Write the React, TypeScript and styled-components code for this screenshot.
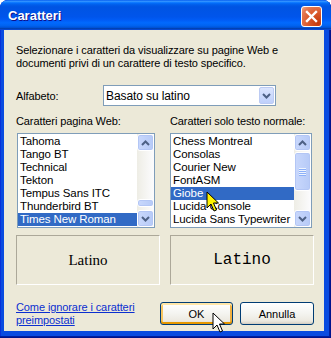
import styled, { createGlobalStyle } from "styled-components";

const Global = createGlobalStyle`
  html, body {
    margin: 0;
    padding: 0;
    background: #ffffff;
  }
  body {
    font-family: "Liberation Sans", Arial, sans-serif;
    font-size: 11px;
    letter-spacing: -0.1px;
    color: #000000;
  }
`;

const webFonts = ["Tahoma", "Tango BT", "Technical", "Tekton", "Tempus Sans ITC", "Thunderbird BT", "Times New Roman"];
const plainFonts = ["Chess Montreal", "Consolas", "Courier New", "FontASM", "Giobe", "Lucida Console", "Lucida Sans Typewriter"];

const Chevron = ({ up }: { up?: boolean }) => (
    <svg width="9" height="6" viewBox="0 0 9 6">
        <polyline
            points={up ? "1,5 4.5,1.5 8,5" : "1,1 4.5,4.5 8,1"}
            fill="none"
            stroke="#4D6185"
            strokeWidth="2"
        />
    </svg>
);

const Arrow = ({ fill }: { fill: string }) => (
    <svg width="14" height="22" viewBox="0 0 14 22">
        <path d="M1,1 L1,17 L5,13 L8,20 L10.5,19 L7.5,12 L12.5,12 Z" fill={fill} stroke="#000" strokeWidth="1" strokeLinejoin="round"/>
    </svg>
);

type ListProps = {
    items: string[];
    selected: number;
    width: number;
    offset: number;
    thumbTop: number;
    thumbHeight: number;
    grip?: boolean;
};

const FontList = ({ items, selected, width, offset, thumbTop, thumbHeight, grip }: ListProps) => (
    <ListBox $width={width} $offset={offset}>
        <Items>
            {items.map((name, i) => (
                <Item key={name} $active={i === selected}>{name}</Item>
            ))}
        </Items>
        <ScrollBar>
            <ScrollButton><Chevron up/></ScrollButton>
            <Track>
                <Thumb $top={thumbTop} $height={thumbHeight}>
                    {grip && <Grip><span/><span/><span/><span/></Grip>}
                </Thumb>
            </Track>
            <ScrollButton><Chevron/></ScrollButton>
        </ScrollBar>
    </ListBox>
);

export default function App() {
    return (
        <>
            <Global/>
            <Window>
                <TitleBar>
                    <Title>Caratteri</Title>
                    <CloseButton>
                        <svg width="13" height="13" viewBox="0 0 13 13">
                            <path d="M2,2 L11,11 M11,2 L2,11" stroke="#fff" strokeWidth="2.4" strokeLinecap="square"/>
                        </svg>
                    </CloseButton>
                </TitleBar>
                <Body>
                    <Description>
                        Selezionare i caratteri da visualizzare su pagine Web e<br/>
                        documenti privi di un carattere di testo specifico.
                    </Description>
                    <AlphabetRow>
                        <AlphabetLabel>Alfabeto:</AlphabetLabel>
                        <Combo>
                            <ComboText>Basato su latino</ComboText>
                            <ComboButton><Chevron/></ComboButton>
                        </Combo>
                    </AlphabetRow>
                    <Columns>
                        <Column>
                            <FieldLabel>Caratteri pagina Web:</FieldLabel>
                            <FontList items={webFonts} selected={6} width={138} offset={1} thumbTop={48} thumbHeight={8}/>
                            <Preview $mono={false}>Latino</Preview>
                        </Column>
                        <Column>
                            <FieldLabel>Caratteri solo testo normale:</FieldLabel>
                            <FontList items={plainFonts} selected={4} width={142} offset={0} thumbTop={1} thumbHeight={39} grip/>
                            <Preview $mono>Latino</Preview>
                        </Column>
                    </Columns>
                    <Footer>
                        <HelpLink href="#">Come ignorare i caratteri <br/>preimpostati</HelpLink>
                        <Buttons>
                            <Button $default $width={73}>OK</Button>
                            <Button $width={74}>Annulla</Button>
                        </Buttons>
                    </Footer>
                </Body>
                <Cursor $x={206} $y={191}><Arrow fill="#FFF200"/></Cursor>
                <Cursor $x={212} $y={312}><Arrow fill="#FFFFFF"/></Cursor>
            </Window>
        </>
    );
}

const Window = styled.div`
    position: relative;
    width: 331px;
    height: 338px;
    display: flex;
    flex-direction: column;
    background: #0a4be0;
    border-radius: 8px 8px 0 0;
    overflow: hidden;
    box-shadow: inset -1px -1px #00138c, inset -2px -2px #001ea0, inset 1px 1px #0831d9;
`

const TitleBar = styled.div`
    height: 30px;
    flex-shrink: 0;
    display: flex;
    align-items: center;
    justify-content: space-between;
    padding: 0 9px 0 8px;
    background: linear-gradient(to bottom, #0058ee 0%, #3593ff 4%, #288eff 6%, #127dff 8%, #036ffc 10%, #0262ee 14%, #0057e5 20%, #0054e3 24%, #0055eb 56%, #005bf5 66%, #026afe 76%, #0062ef 86%, #0052d6 92%, #0040ab 94%, #0a4be0 100%);
`

const Title = styled.span`
    font-family: "Liberation Sans", Arial, sans-serif;
    font-weight: 700;
    font-size: 13px;
    letter-spacing: 0;
    color: #ffffff;
    text-shadow: 1px 1px #0f1089;
    margin-top: 1px;
`

const CloseButton = styled.div`
    width: 21px;
    height: 21px;
    box-sizing: border-box;
    display: flex;
    align-items: center;
    justify-content: center;
    border: 1px solid #ffffff;
    border-radius: 3px;
    background: radial-gradient(circle at 85% 85%, #c3390d 0%, #d9582a 45%, #e47a54 80%, #f0a98a 100%);
    margin-top: 2px;
`

const Body = styled.div`
    flex: 1;
    display: flex;
    flex-direction: column;
    margin: 0 7px 7px 4px;
    padding: 14px 10px 0 12px;
    background: #ece9d8;
`

const Description = styled.p`
    margin: 0;
    line-height: 13px;
`

const AlphabetRow = styled.div`
    display: flex;
    align-items: center;
    margin-top: 15px;
`

const AlphabetLabel = styled.span`
    width: 87px;
`

const Combo = styled.div`
    width: 173px;
    height: 21px;
    box-sizing: border-box;
    display: flex;
    align-items: center;
    justify-content: space-between;
    border: 1px solid #7f9db9;
    background: #ffffff;
`

const ComboText = styled.span`
    padding-left: 2px;
    font-size: 12px;
`

const ComboButton = styled.div`
    width: 15px;
    height: 17px;
    margin-right: 1px;
    box-sizing: border-box;
    display: flex;
    align-items: center;
    justify-content: center;
    border: 1px solid #bccbf3;
    border-radius: 2px;
    background: linear-gradient(to bottom, #dbe5fe, #bfd0fb);
`

const Columns = styled.div`
    display: grid;
    grid-template-columns: 144px 144px;
    column-gap: 10px;
    margin-top: 9px;
`

const Column = styled.div`
    display: flex;
    flex-direction: column;
`

const FieldLabel = styled.span`
    line-height: 13px;
`

const ListBox = styled.div<{ $width: number; $offset: number }>`
    width: ${p => p.$width}px;
    margin-left: ${p => p.$offset}px;
    height: 95px;
    margin-top: 5px;
    box-sizing: border-box;
    display: flex;
    border: 1px solid #7f9db9;
    background: #ffffff;
`

const Items = styled.div`
    flex: 1;
    padding-top: 1px;
    overflow: hidden;
`

const Item = styled.div<{ $active: boolean }>`
    height: 13px;
    line-height: 13px;
    padding-left: 2px;
    white-space: nowrap;
    font-size: 11.5px;
    background: ${p => (p.$active ? "#316ac5" : "transparent")};
    color: ${p => (p.$active ? "#ffffff" : "#000000")};
`

const ScrollBar = styled.div`
    width: 17px;
    display: flex;
    flex-direction: column;
    background: linear-gradient(to right, #eeede5, #fcfcfe);
`

const ScrollButton = styled.div`
    width: 17px;
    height: 17px;
    box-sizing: border-box;
    display: flex;
    align-items: center;
    justify-content: center;
    border: 1px solid #ffffff;
    border-radius: 3px;
    background: linear-gradient(to right, #c9d8fc, #b6caf7);
    box-shadow: inset 0 0 0 1px #b3c6f5;
`

const Track = styled.div`
    flex: 1;
`

const Thumb = styled.div<{ $top: number; $height: number }>`
    margin-top: ${p => p.$top}px;
    height: ${p => p.$height}px;
    box-sizing: border-box;
    display: flex;
    align-items: center;
    justify-content: center;
    border: 1px solid #ffffff;
    border-radius: 3px;
    background: linear-gradient(to right, #c9d8fc, #b6caf7);
    box-shadow: inset 0 0 0 1px #b3c6f5;
`

const Grip = styled.div`
    display: flex;
    flex-direction: column;
    gap: 1px;
    span {
        display: block;
        width: 7px;
        height: 1px;
        background: #eef4fe;
        box-shadow: 0 1px #8cb0f8;
    }
`

const Preview = styled.div<{ $mono: boolean }>`
    height: 50px;
    margin-top: 7px;
    box-sizing: border-box;
    display: flex;
    align-items: center;
    justify-content: center;
    border-top: 1px solid #aca899;
    border-left: 1px solid #aca899;
    border-right: 1px solid #ffffff;
    border-bottom: 1px solid #ffffff;
    letter-spacing: 0;
    font-family: ${p => (p.$mono ? '"Liberation Mono", "Courier New", monospace' : '"Liberation Serif", "Times New Roman", serif')};
    font-size: ${p => (p.$mono ? 16 : 15)}px;
`

const Footer = styled.div`
    display: flex;
    justify-content: space-between;
    align-items: flex-start;
    margin-top: 16px;
`

const HelpLink = styled.a`
    line-height: 13px;
    color: #0b2fd0;
    text-decoration: underline;
`

const Buttons = styled.div`
    display: flex;
    gap: 7px;
    margin-top: 1px;
`

const Button = styled.button<{ $default?: boolean; $width: number }>`
    width: ${p => p.$width}px;
    height: 23px;
    padding: 0;
    font-family: "Liberation Sans", Arial, sans-serif;
    font-size: 11px;
    color: #000000;
    border: 1px solid #003c74;
    border-radius: 3px;
    background: linear-gradient(to bottom, #ffffff 0%, #f4f4f0 50%, #ece9e0 85%, #d6d0c5 100%);
    box-shadow: ${p => (p.$default
        ? "inset 0 2px 0 #ffe6a8, inset 0 -2px 0 #e59700, inset 2px 0 0 #f8c660, inset -2px 0 0 #f0b040"
        : "inset 0 -1px 0 #d6d0c5")};
`

const Cursor = styled.div<{ $x: number; $y: number }>`
    position: absolute;
    left: ${p => p.$x}px;
    top: ${p => p.$y}px;
    line-height: 0;
`
